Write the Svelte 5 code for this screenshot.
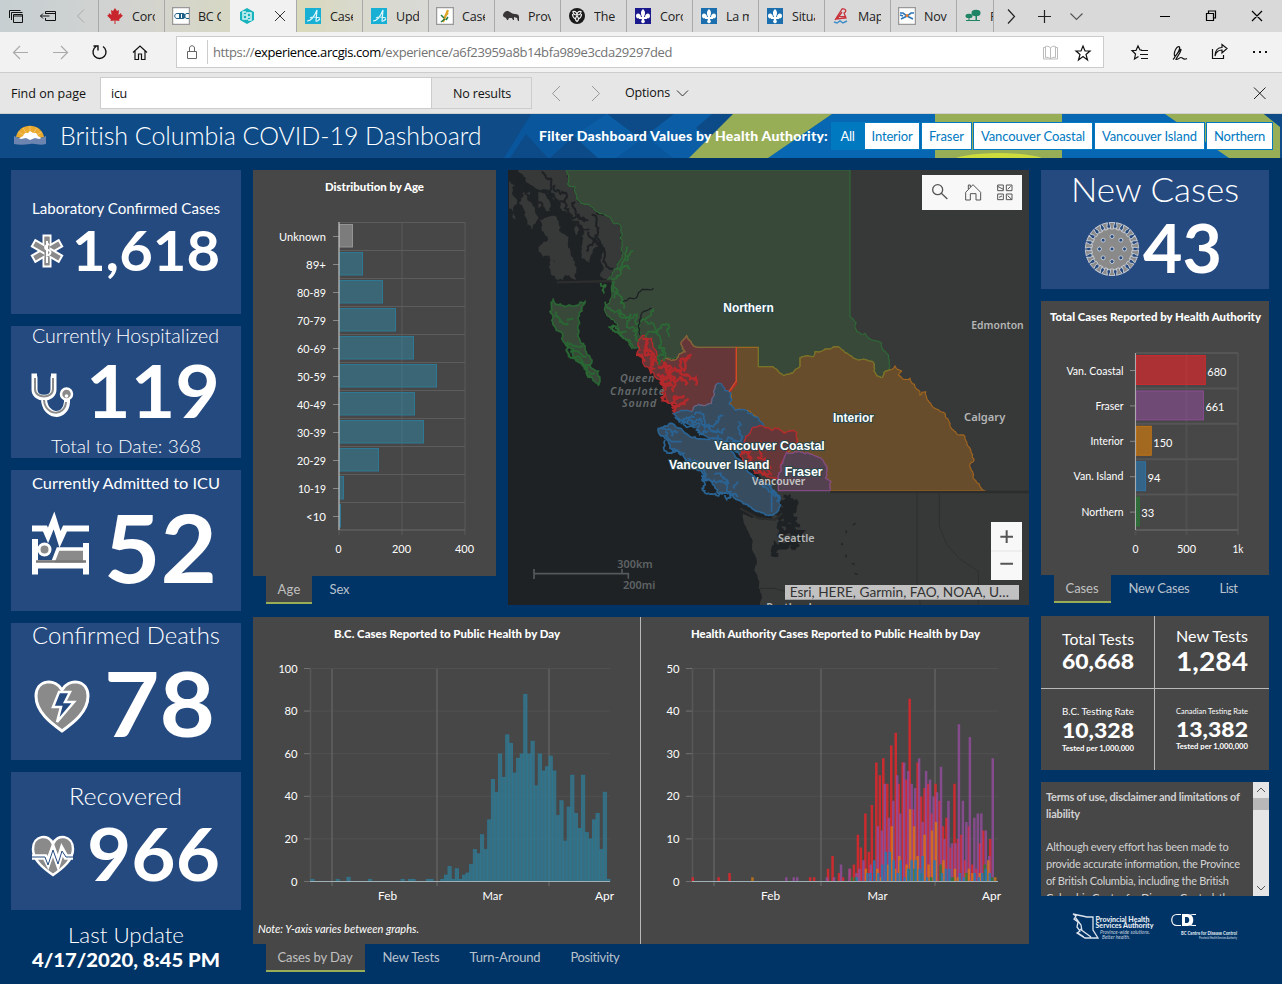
<script>
  // Tracks a run of text to a fixed measure by adjusting its letter spacing.
  function fit(node, width) {
    const range = document.createRange();
    range.selectNodeContents(node);
    const natural = range.getBoundingClientRect().width;
    node.style.letterSpacing = (width - natural) / node.textContent.length + 'px';
  }

  const tabsBefore = [
    { icon: 'maple', label: 'Coro' },
    { icon: 'cdc', label: 'BC C' }
  ];
  const tabsAfter = [
    { icon: 'ab', label: 'Case' },
    { icon: 'ab', label: 'Upda' },
    { icon: 'sask', label: 'Case' },
    { icon: 'bison', label: 'Prov' },
    { icon: 'ont', label: 'The' },
    { icon: 'qc', label: 'Coro', c: '#1a1a8c' },
    { icon: 'qc', label: 'La m', c: '#1b6fae' },
    { icon: 'qc', label: 'Situa', c: '#1b6fae' },
    { icon: 'nb', label: 'Map' },
    { icon: 'ns', label: 'Nov' },
    { icon: 'pei', label: 'P', last: true }
  ];

  const filters = [
    ['Interior', 54, 41], ['Fraser', 49, 35], ['Vancouver Coastal', 118, 104],
    ['Vancouver Island', 109, 95], ['Northern', 65, 51]
  ];

  const ages = [
    ['Unknown', 14, 47], ['89+', 24, 20], ['80-89', 44, 29], ['70-79', 57, 29], ['60-69', 75, 29],
    ['50-59', 98, 29], ['40-49', 76, 29], ['30-39', 85, 29], ['20-29', 40, 29], ['10-19', 5, 28], ['<10', 2, 20]
  ];

  const authorities = [
    { name: 'Van. Coastal', len: 57, v: 680, c: '#e3272b', op: 0.65 },
    { name: 'Fraser', len: 28, v: 661, c: '#984ea3', op: 0.5 },
    { name: 'Interior', len: 33, v: 150, c: '#d77c0c', op: 0.65 },
    { name: 'Van. Island', len: 50, v: 94, c: '#2879b4', op: 0.6 },
    { name: 'Northern', len: 42, v: 33, c: '#2a7a36', op: 0.7 }
  ];

  const early = new Map([[0, 1], [7, 1], [10, 2], [16, 1], [25, 1], [27, 1], [28, 1], [32, 1], [33, 1]]);
  const late = [1, 3, 7, 1, 6, 1, 3, 4, 8, 15, 13, 22, 15, 29, 48, 42, 60, 49, 69, 65, 51, 58, 60, 88, 60, 66, 45, 60, 52,
    54, 59, 52, 31, 38, 19, 35, 50, 32, 25, 50, 23, 20, 29, 32, 15, 42, 1];
  const daily = [...Array(83).keys()].map((i) => (i < 36 ? (early.get(i) ?? 0) : late[i - 36]));

  // Per-authority daily counts: colour, opacity, then position along the axis (half pixels) and count.
  const series = [
    ['#e3272b', 0.85, [1, 1, 53, 1, 75, 2, 237, 1, 245, 1, 273, 3, 282, 6, 295, 2, 303, 1, 317, 3, 325, 4, 333, 11, 339, 8, 348, 16, 355, 7, 361, 18, 370, 28, 377, 25, 384, 29, 392, 23, 400, 32, 409, 35, 415, 23, 423, 28, 430, 24, 437, 43, 444, 17, 453, 28, 460, 20, 467, 22, 474, 23, 481, 16, 489, 23, 497, 19, 504, 13, 511, 15, 519, 8, 527, 23, 534, 10, 541, 11, 548, 5, 556, 13, 563, 4, 571, 3, 578, 9, 585, 12, 599, 10]],
    ['#984ea3', 0.75, [189, 1, 204, 1, 211, 1, 271, 1, 285, 1, 299, 4, 316, 3, 330, 2, 336, 3, 344, 5, 359, 4, 373, 13, 381, 12, 387, 23, 395, 15, 404, 19, 412, 25, 418, 16, 426, 28, 434, 26, 441, 23, 448, 22, 456, 29, 463, 14, 470, 26, 478, 24, 485, 20, 492, 21, 500, 27, 507, 10, 515, 19, 522, 9, 529, 9, 536, 37, 544, 19, 551, 14, 558, 34, 567, 15, 574, 16, 581, 16, 590, 12, 597, 6, 604, 29]],
    ['#e07f0c', 0.7, [121, 1, 349, 3, 372, 3, 379, 1, 394, 4, 401, 13, 408, 3, 416, 6, 431, 4, 438, 17, 446, 13, 453, 6, 467, 11, 475, 4, 482, 12, 490, 14, 505, 5, 528, 3, 534, 1, 550, 2, 556, 3, 563, 2, 578, 2, 595, 5, 609, 1]],
    ['#2a7a36', 0.85, [321, 1, 328, 1, 435, 3, 447, 3, 461, 2, 480, 1, 499, 4, 519, 1, 524, 1, 551, 2, 588, 4, 603, 1]],
    ['#2879b4', 0.85, [331, 1, 352, 2, 358, 2, 366, 5, 374, 2, 382, 4, 389, 7, 397, 7, 405, 5, 413, 2, 419, 5, 427, 1, 434, 3, 441, 5, 449, 5, 457, 3, 463, 6, 472, 1, 487, 5, 502, 2, 510, 3, 517, 3, 538, 2, 546, 1, 568, 2, 576, 1, 583, 2, 590, 3, 598, 2]]
  ];

  // Roughens each slanted edge of an outline; shared edges come out the same from both sides.
  function hash(a, b) {
    const s = Math.sin(a * 12.9898 + b * 78.233) * 43758.5453;
    return s - Math.floor(s) - 0.5;
  }
  function edge(a, b, k, out) {
    const dx = b[0] - a[0], dy = b[1] - a[1], len = Math.hypot(dx, dy);
    if (len < 7 || !dx || !dy) { out.push(b); return; }
    const mx = (a[0] + b[0]) / 2, my = (a[1] + b[1]) / 2;
    const m = [mx + hash(mx, my) * len * k, my + hash(my, mx) * len * k];
    edge(a, m, k, out);
    edge(m, b, k, out);
  }
  function shape(str, k = 0.35, close = true) {
    const p = str.split(' ').map((q) => q.split(',').map(Number));
    const out = [p[0]];
    for (let i = 1; i < p.length; i++) edge(p[i - 1], p[i], k, out);
    if (close) edge(p[p.length - 1], p[0], k, out);
    return 'M' + out.map((q) => q[0].toFixed(1) + ' ' + q[1].toFixed(1)).join('L') + (close ? 'Z' : '');
  }

  const northern = '185,15 192,40 188,58 210,65 212,85 228,115 258,125 300,150 325,175 347,182 345,220 352,280 335,310 308,345 320,350 318,400 300,425 305,450 335,475 350,515 370,530 380,550 400,548 405,555 412,512 440,520 455,560 460,600 480,580 520,575 540,560 530,530 545,512 558,530 580,547 760,547 760,605 800,605 835,632 885,605 885,578 925,575 930,560 975,552 1000,545 1030,568 1060,585 1105,592 1115,632 1130,638 1155,615 1150,580 1130,535 1100,525 1080,505 1055,500 1040,460 1035,455 1035,15';
  const interior = '694,547 760,547 760,605 800,605 835,632 885,605 885,578 925,575 930,560 975,552 1000,545 1030,568 1060,585 1105,592 1115,632 1130,638 1155,615 1170,603 1190,618 1180,630 1215,640 1240,675 1245,690 1262,680 1290,730 1330,765 1360,810 1380,815 1395,850 1398,915 1405,940 1441,977 975,977 978,950 962,940 965,910 955,888 925,870 870,860 845,862 878,830 875,805 835,803 820,790 780,788 740,745 690,735 672,715 678,685 672,680 694,648';
  const coastalN = '412,512 440,520 455,560 460,600 480,580 520,575 540,560 530,530 545,512 558,530 580,547 694,547 694,648 672,680 655,665 638,655 628,690 620,715 580,718 560,740 505,745 515,715 490,715 478,680 455,640 440,620 420,605 395,570 405,555';
  const coastalS = '722,815 740,790 780,788 820,790 835,803 875,805 878,830 845,862 835,885 830,915 820,940 790,935 750,925 720,895 705,870 725,850';
  const fraser = '845,862 870,860 925,870 955,888 965,910 962,940 978,950 975,977 820,977 820,940 830,915 835,885';
  const islandMain = '505,745 560,740 580,718 620,715 628,690 638,655 655,665 672,680 678,685 672,715 690,735 740,745 780,788 740,790 722,815 725,850 705,870 690,850 670,830 640,818 600,812 570,790 520,765';
  const island = '460,790 500,775 530,792 560,817 600,822 650,835 690,875 720,900 760,945 795,962 825,1000 812,1045 795,1050 760,1040 690,1000 620,950 590,920 540,880 495,850 480,820';
  const haida = '145,400 155,418 175,422 200,424 240,410 222,470 218,510 240,550 260,610 285,650 280,660 245,625 210,580 175,530 165,500 145,480 135,440 140,425';
  const alaska = ['40,15 185,15 192,40 188,58 210,65 212,85 228,115 258,125 300,150 325,175 347,182 345,220 352,280 335,310 308,345 285,335 290,280 275,225 230,180 195,150 150,105 95,75',
    '12,40 30,60 32,100 30,165 12,130', '52,85 75,80 90,130 85,200 60,180 55,130', '100,80 125,95 135,140 100,130',
    '105,165 150,150 190,215 200,275 212,345 180,330 150,290 115,275 100,250 130,225', '155,20 195,120 225,190 215,210 165,130', '235,195 270,200 280,245 255,295 230,280', '130,275 160,290 175,345 150,335'];
  const usLand = '715,1045 740,1060 795,1065 830,1035 820,977 1572,977 1572,1320 765,1320 762,1260 755,1180 740,1120 718,1080';
  const channels = ['25,15 50,60 90,90 140,145 200,210 235,290 290,340', '90,70 140,130 180,140 240,170', '150,60 180,130 190,180 215,270', '260,150 285,230 295,290 325,310', '110,20 130,80 180,110', '210,110 225,160 250,165', '250,200 262,240 250,260'];
  const northFjords = ['318,350 345,315 375,312', '335,315 355,290 368,245', '360,285 385,258', '322,370 350,395 360,430', '300,410 345,435 395,490', '310,485 345,510 385,545', '325,480 365,500', '340,440 375,490 400,530', '405,510 408,470 445,430', '420,470 450,490 480,480 492,515', '440,500 470,530 480,590', '460,600 475,570 460,545', '285,355 298,385', '330,350 326,400', '410,520 430,500 460,500'];
  const haidaFjords = ['178,535 200,540 235,545', '195,560 225,565 245,575', '210,580 240,600 255,600', '230,600 250,620 270,625', '150,440 165,470 190,480', '190,530 215,575 260,635', '185,465 205,460'];
  const redFjords = ['412,520 420,560 440,600', '430,530 445,590 440,625', '400,565 420,590', '460,610 500,620 530,610 560,570', '525,625 560,640 578,658', '470,630 500,645 540,660', '465,650 500,660 490,710', '475,600 510,640 505,680', '505,700 535,690', '500,730 540,720 550,700', '480,590 500,610 495,650', '550,570 540,620', '455,630 480,640 475,660', '510,740 520,700'];
  const blueFjords = ['510,755 560,765 600,780', '530,770 570,755', '600,790 640,770 650,750', '620,800 660,790', '690,850 705,800 700,770', '640,810 690,830 700,860', '480,800 500,830 530,830', '500,850 540,865', '560,890 600,910', '590,930 640,950 680,980', '630,930 660,960', '690,970 700,950', '470,790 520,800', '770,960 800,990 800,1040', '800,980 825,1000', '560,765 580,790', '660,990 700,995', '520,760 550,785 610,800', '570,750 600,770 640,800', '655,830 690,850', '540,880 600,925 660,985', '785,960 815,1010', '480,825 520,860'];

  const gauge = Array.from({ length: 22 }, (_, i) => (i * 360) / 22);
  const spots = Array.from({ length: 8 }, (_, i) => [12.5 * Math.cos((i * Math.PI) / 4), 12.5 * Math.sin((i * Math.PI) / 4)]);
</script>

{#snippet t(x, y, s, size, len, anchor = 'start', weight = 400, fill = '#fff')}
  <g><text {x} {y} font-size={size} textLength={len} lengthAdjust="spacingAndGlyphs" text-anchor={anchor} font-weight={weight} {fill}>{s}</text></g>
{/snippet}

{#snippet favicon(tab)}
  <svg class="fav" width="18" height="18" viewBox="-1 -1 18 18">
    {#if tab.icon === 'maple'}
      <path fill="#c8252c" d="M8 0l2 3 2-1-.5 5L14 5l.5 2 1.5.5-4 4 .5 1.5-4-.5V16H7.500v-3.500l-4 .5.5-1.500-4-4L1.500 7 2 5l2.500 2L4 2l2 1z" />
    {:else if tab.icon === 'cdc'}
      <path fill="#fff" stroke="#999" stroke-width="1.5" d="M-.5-.5h17v17h-17z" /><path fill="#1d5f86" d="M6 5h4c3 0 3 6 0 6H6z" /><path fill="none" stroke="#1d5f86" d="M6 5.500H4c-3 0-3 5 0 5h2M16 5.500h-2c-3 0-3 5 0 5h2" /><path stroke="#fff" d="M8.500 6v4" />
    {:else if tab.icon === 'ab'}
      <path fill="#17afd4" d="M0 0h16v16H0z" /><path fill="none" stroke="#dff6fb" stroke-width="1.2" d="M2 13c5 0 8-6 10-11l-1 11c1 1 3-1 4-2M5 10c3-2 6-1 10 0" />
    {:else if tab.icon === 'sask'}
      <path fill="#fff" stroke="#999" stroke-width="1.5" d="M-.5-.5h17v17h-17z" /><path stroke="#e0a526" stroke-width="2.2" d="M6 14l5-12M8 8l3-3" /><path stroke="#257b46" stroke-width="1.5" d="M4 14l4-3M7 10L4 7M9 12l2-3" />
    {:else if tab.icon === 'bison'}
      <path fill="#3a3638" d="M0 8c0-3 2-5 5-5 3 1 4 3 7 3 3 0 4 1 4 3v4h-1l-1-3-3-1v3h-1l-1-2H6l-1 2H4l-1-2-2-1z" />
    {:else if tab.icon === 'ont'}
      <circle cx="8" cy="8" r="8" fill="#1a1a1a" /><path fill="none" stroke="#eee" stroke-width="1.2" d="M8 7C6 7 4 6 4 3.500 7 3 8 5 8 7zM8 7c2 0 4-1 4-3.500C9 3 8 5 8 7zM8 8c-2 2-2 4 0 5.500 2-1.500 2-3.500 0-5.500zM3.500 6c0 3 1 4 3 5M12.500 6c0 3-1 4-3 5" />
    {:else if tab.icon === 'qc'}
      <path fill={tab.c} d="M0 0h16v16H0z" /><path fill="#fff" d="M8 1c3 3 2 5 1 8h1c0-4 5-5 5-1 0 2-2 3-3 2v1H9l1 3-2 1.5L6 14l1-3H4v-1C3 11 1 10 1 8c0-4 5-3 5 1h1C6 6 5 4 8 1z" />
    {:else if tab.icon === 'nb'}
      <path fill="none" stroke="#c9303a" stroke-width="1.3" d="M2 12l7-11c4-1 5 3 2 4l2 5-9 1 5-7M5 8l7 1" /><path fill="none" stroke="#3f8ecb" stroke-width="1.5" d="M1 14l3 1 3-2 3 2 4-2" />
    {:else if tab.icon === 'ns'}
      <path fill="#fff" stroke="#999" stroke-width="1.5" d="M-.5-.5h17v17h-17z" /><path stroke="#2b76b9" stroke-width="1.6" fill="none" d="M1 5h3l4 3-6 3M15 5h-3L8 8l6 3M1 7l3 1" /><circle cx="8" cy="7.500" r="1.5" fill="#e9782b" />
    {:else if tab.icon === 'pei'}
      <g fill="#1f8465"><ellipse cx="11" cy="5" rx="4.5" ry="3.2" /><ellipse cx="4" cy="8" rx="3.5" ry="2.2" /><path d="M10.500 5h1.500v7h3v1H1v-1h2.500V9h1v3h6z" /></g>
    {/if}
  </svg>
{/snippet}

{#snippet tabItem(tab)}
  <div class="tab" class:last={tab.last}>
    {@render favicon(tab)}
    <span class="tab-label">{tab.label}</span>
  </div>
{/snippet}

<div class="page">
  <div class="tabstrip">
    <div class="strip-tools">
      <svg width="98" height="32" viewBox="0 0 98 32" fill="none" stroke="#111">
        <path d="M9.500 18V10.500h11M11.500 20V12.500h11M13.500 14.500h9v8h-9zM13 16h10" />
        <path d="M45.500 14v-2.500h10v9h-10V18M45 13.500h10M40.500 16h9M43 13.500L40.500 16l2.500 2.500" />
        <path stroke="#aaa" d="M84 9.500L77.500 16l6.500 6.500" />
      </svg>
    </div>
    {#each tabsBefore as tab}{@render tabItem(tab)}{/each}
    <div class="tab active">
      <svg width="67" height="32" viewBox="0 0 67 32" fill="none">
        <path fill="#18b3bd" d="M17 8l7 4v8l-7 4-7-4v-8z" /><path stroke="#d8f4f5" stroke-width="1.5" d="M16 12h-3v7h4v-4h-3M18 20h3v-7h-4v4h3" />
        <path stroke="#333" d="M45 11l10 10M55 11L45 21" />
      </svg>
    </div>
    {#each tabsAfter as tab}{@render tabItem(tab)}{/each}
    <svg class="window-tools" width="287" height="32" viewBox="994 0 287 32" fill="none" stroke="#222" stroke-width="1.2">
      <path d="M1008 9.500l6.500 7-6.500 7M1038 16.500h13M1044.500 10v13" />
      <path stroke="#555" d="M1070.500 13.500l6 6 6-6" />
      <path stroke="#000" d="M1160 16.500h10M1206.500 13.500h7v7h-7zM1208.500 13v-2h7v7h-2M1252 11l10 10M1262 11l-10 10" />
    </svg>
  </div>

  <div class="navbar">
    <svg width="176" height="40" viewBox="0 32 176 40" fill="none" stroke="#111" stroke-width="1.2">
      <path stroke="#aaa" d="M28 52.500H13.500M20 46l-6.500 6.500L20 59M53 52.500h14.500M61 46l6.500 6.500L61 59" />
      <path stroke-width="1.4" d="M96 46.500a6.500 6.500 0 1 0 7 0M93.500 46H98v4.500" />
      <path d="M133 52.500l7-6.500 7 6.500M135 51v8.500h3.500V54h3v5.500h3.500V51" />
    </svg>
    <div class="address">
      <svg width="35" height="30" viewBox="177 37 35 30" fill="none" stroke="#666"><path d="M187.500 51.500h9v7h-9zM189.500 51v-3c0-3 5-3 5 0v3" /><path stroke="#ccc" d="M207.500 40v24" /></svg>
      <span class="url" use:fit={459}>https://<b>experience.arcgis.com</b>/experience/a6f23959a8b14bfa989e3cda29297ded</span>
      <svg class="right" width="66" height="30" viewBox="1037 37 66 30" fill="none">
        <path stroke="#bbb" d="M1050.500 48v11h-7V47.500h2m5 11.500h7V47.500h-2M1050.500 48c-1-2-4-2-5-1.500v11c2-.5 4 0 5 1.500 1-1.500 3-2 5-1.500v-11c-2-.5-4-.5-5 1.500" />
        <path stroke="#111" stroke-width="1.2" d="M1083 46l2 5h5l-4 3.500 1.500 5.500-4.500-3.500-4.500 3.500 1.500-5.500-4-3.500h5z" />
      </svg>
    </div>
    <svg class="right" width="177" height="40" viewBox="1104 32 177 40" fill="none" stroke="#111" stroke-width="1.2">
      <path d="M1142 50h-2l-2-4-2 4.500h-4l3.500 3.500-1 5 4-2.500M1141 50.500h7M1140 54.500h8M1141 58.500h7" />
      <path d="M1173 59.500c1-1 2-2 2-3-2-3 1-10 4-10 2 1-1 7-4 10 4-5 6-8 6-7 0 3-4 7-5 10 3 0 3-2 5-2s2 3 6 1" />
      <path d="M1212.500 49v9.500h11V55M1215 56c1-4 4-6 7-6v3l5-4.500-5-4v3c-4 0-7 3-7 8.500z" />
      <path stroke-width="2" d="M1253 52h2M1259 52h2M1265 52h2" />
    </svg>
  </div>

  <div class="findbar">
    <span class="find-label"><span use:fit={75}>Find on page</span></span>
    <div class="find-input"><span use:fit={16}>icu</span></div>
    <div class="find-result"><span use:fit={58}>No results</span></div>
    <svg width="93" height="40" viewBox="532 73 93 40" fill="none" stroke="#999"><path d="M560 86l-7.500 7.500L560 101M592 86l7.500 7.500L592 101" /></svg>
    <span class="options"><span use:fit={45}>Options</span></span>
    <svg width="20" height="40" viewBox="668 73 20 40" fill="none" stroke="#333"><path d="M675 90.500l5.500 5.500 5.500-5.500" /></svg>
    <svg class="right" width="40" height="40" viewBox="1240 73 40 40" fill="none" stroke="#222"><path d="M1254 87.500l11.500 11.500M1265.500 87.500L1254 99" /></svg>
  </div>

  <header>
    <svg class="art" width="1282" height="44" viewBox="0 114 1282 44">
      <path fill="#0a569c" d="M531 114h300l-60 44H504z" />
      <path fill="#0d4b88" d="M526 134l22 24h-38zM607 114h67l-34 26zM574 136l24 22h-48zM712 114h22l-25 24-14-10z" />
      <path fill="#0b62ab" d="M574 136l33-22 34 25-25 19h-18zM646 136l28-22h38l-16 14 15 12-18 18h-20z" opacity=".7" />
      <path fill="#0767b3" d="M832 114h448v44H768z" />
      <path fill="#97ae57" d="M733 114h99l-64 44h-79zM935 114h127v44H935zM1165 114h99l16 13v31h-51z" />
      <ellipse cx="999" cy="162" rx="48" ry="9" fill="#cddb3d" />
      <path fill="#0e4b87" d="M1264 114h18v14z" />
    </svg>
    <svg class="sun" width="32" height="22" viewBox="0 0 32 22">
      <path fill="#eaa92f" d="M2 12C5-3 27-3 30 12L16 15z" /><path stroke="#f7d58a" stroke-width=".6" d="M16 13V1M16 13L9 3M16 13l7-10M16 13L4 7M16 13l12-6" />
      <path fill="#fff" d="M4 14l5-3 2-3h3l2-2 3 2h3l2 3 5 3-5 2H8z" /><path fill="#6c84b0" d="M0 11l7 3 5-1 4 2 5-2 4 1 7-3v8c-7 2-10-1-16 0-6 1-11 1-16 0z" />
    </svg>
    <h1><span use:fit={422}>British Columbia COVID-19 Dashboard</span></h1>
    <div class="filter"><span use:fit={289}>Filter Dashboard Values by Health Authority:</span></div>
    <div class="buttons">
      <div class="btn on" style:width="31px"><span use:fit={14}>All</span></div>
      {#each filters as [name, w, len]}<div class="btn" style:width="{w}px"><span use:fit={len}>{name}</span></div>{/each}
    </div>
  </header>

  <main>
    <div class="col left">
      <svg class="card" width="230" height="144" viewBox="11 170 230 144">
        {@render t(32, 214, 'Laboratory Confirmed Cases', 15, 188)}
        {#each [0, 60, 120] as a}<path transform="rotate({a} 47 251)" fill="#8a8a8a" stroke="#fff" stroke-width="2" d="M43.500 235.500h7v31h-7z" />{/each}
        <path fill="#8a8a8a" d="M44.500 237h5v28h-5z" /><path fill="none" stroke="#fff" stroke-width="2" d="M47 241v22M49 244c-5 2-5 5-1 6s3 5-2 6" />
        {@render t(72, 270.5, '1,618', 56, 148, 'start', 700)}
      </svg>
      <svg class="card" width="230" height="132" viewBox="11 326 230 132">
        {@render t(32, 343, 'Currently Hospitalized', 19, 187, 'start', 300)}
        <path fill="none" stroke="#fff" stroke-width="6" d="M37 376.500h-2.500v13c0 11 19 11 19 0v-13H51M44 398c0 20 22 21 23 4v-8" />
        <path fill="none" stroke="#8a8a8a" stroke-width="2" d="M35 378v11c0 10 18 10 18 0v-11M44 400c1 16 21 17 22 2" />
        <circle cx="66.5" cy="394" r="5.5" fill="#8a8a8a" stroke="#fff" stroke-width="2.5" /><circle cx="66.5" cy="396" r="1.8" fill="#fff" />
        {@render t(86, 418, '119', 73, 134, 'start', 700)}
        {@render t(51, 453, 'Total to Date: 368', 18.5, 150, 'start', 300)}
      </svg>
      <svg class="card" width="230" height="141" viewBox="11 470 230 141">
        {@render t(32, 489, 'Currently Admitted to ICU', 15.5, 188)}
        <path fill="none" stroke="#fff" stroke-width="6" d="M32 528.500h13l3 7 6-15 6 19 5-11h24" />
        <path fill="#8a8a8a" stroke="#fff" stroke-width="3.5" d="M34 566v-4h19l5-13h29v17z" />
        <path fill="none" stroke="#fff" stroke-width="6" d="M35 539v35.500M86 543v31.500M35 565.500h51" /><circle cx="44.5" cy="549.5" r="5.500" fill="#8a8a8a" stroke="#fff" stroke-width="3" />
        <path stroke="#777" stroke-width="2.5" d="M36 561.500h50" />
        {@render t(104, 583, '52', 94, 113, 'start', 700)}
      </svg>
      <svg class="card" width="230" height="137" viewBox="11 623 230 137">
        {@render t(32, 644, 'Confirmed Deaths', 23, 188, 'start', 300)}
        <path fill="#8a8a8a" stroke="#fff" stroke-width="3" d="M62 731c-11-8-26-19-26-35 0-17 20-18 26-6 6-12 26-11 26 6 0 16-15 27-26 35z" />
        <path fill="#254a80" stroke="#fff" stroke-width="2.5" d="M59 692h11l-5 10h9l-17 20 4-15h-8z" />
        {@render t(104, 737, '78', 90, 111, 'start', 700)}
      </svg>
      <svg class="card" width="230" height="138" viewBox="11 772 230 138">
        {@render t(69, 805, 'Recovered', 23, 113, 'start', 300)}
        <path fill="#8a8a8a" stroke="#fff" stroke-width="2.5" d="M53 875c-10-7-20-15-20-26 0-14 16-16 20-5 4-11 20-9 20 5 0 11-10 19-20 26z" />
        <path fill="none" stroke="#fff" stroke-width="5.5" d="M32 857h13l3 6 5-14 5 14 4-13 4 7h7" /><path fill="none" stroke="#254a80" d="M32 857h13l3 8 5-15 5 14 4-13 4 6h7" />
        {@render t(87, 880.5, '966', 73, 133, 'start', 700)}
      </svg>
      <svg class="update" width="230" height="50" viewBox="11 922 230 50">
        {@render t(68, 943, 'Last Update', 21, 116, 'start', 300)}
        {@render t(32, 967, '4/17/2020, 8:45 PM', 19.5, 188, 'start', 900)}
      </svg>
    </div>

    <div class="col middle">
      <div class="upper">
        <div class="age">
          <svg class="panel" width="243" height="406" viewBox="253 170 243 406">
            {@render t(325, 191, 'Distribution by Age', 11, 99, 'start', 900)}
            {#each [339, 402, 465] as x}<path stroke="#505050" stroke-width="2" d="M{x} 222v313" />{/each}
            {#each ages as [name, w, len], i}
              <path stroke="#5c5c5c" d="M339 {222.5 + i * 28}h126" />
              <rect x="339.5" y={224.5 + i * 28} width={w - 1} height="22.5" fill={i ? '#2e86a3' : '#999'} fill-opacity={i ? 0.5 : 0.65} stroke={i ? '#2e7893' : '#949494'} />
              <path stroke="#888" d="M333 {236.5 + i * 28}h6" />
              {@render t(326, 241 + i * 28, name, 11.5, len, 'end')}
            {/each}
            <path stroke="#6a6a6a" d="M339 530h126" /><path stroke="#bbb" stroke-opacity=".6" stroke-width="2" d="M339 222v308" />
            {@render t(338.5, 553, '0', 11.5, 6, 'middle')}{@render t(401.5, 553, '200', 11.5, 19, 'middle')}{@render t(464.5, 553, '400', 11.5, 19, 'middle')}
          </svg>
          <div class="tabs"><div class="sel" style:width="46px"><span use:fit={23}>Age</span></div><div class="opt" style:margin-left="18px"><span use:fit={20}>Sex</span></div></div>
        </div>
        <svg class="map" width="521" height="435" viewBox="9 15 1563 1305">
          <path fill="#1e2224" d="M0 0h1600v1400H0z" />
          <path fill="#373838" d="M600 15h972v970H800L600 700z" />
          <path fill="#373838" d={shape(usLand, 0.3)} />
          {#each alaska as a}<path fill="#373838" d={shape(a, 0.5)} />{/each}
          {#each channels as c}<path fill="none" stroke="#1e2224" stroke-width="6" d={shape(c, 0.6, false)} />{/each}
          <path fill="#38493a" stroke="#2f6836" stroke-width="3.5" d={shape(northern)} />
          <path fill="#38493a" stroke="#2a6633" stroke-width="5" d={shape(haida, 0.5)} />
          {#each haidaFjords as f}<path fill="none" stroke="#2a6633" stroke-width="6" d={shape(f, 0.7, false)} />{/each}
          <path fill="#684d2d" stroke="#a0651f" stroke-width="3.5" d={shape(interior)} />
          <path fill="none" stroke="#6b7a2c" stroke-width="3" d={shape('760,547 760,605 800,605 835,632 885,605 885,578 925,575 930,560 975,552 1000,545 1030,568 1060,585 1105,592 1115,632 1130,638 1155,615', 0.35, false)} />
          <path fill="#663739" stroke="#b52a2c" stroke-width="4" d={shape(coastalN, 0.4)} />
          <path fill="#384c60" stroke="#2a6495" stroke-width="4" d={shape(islandMain, 0.4)} />
          <path fill="#384c60" stroke="#2a6495" stroke-width="5" d={shape(island, 0.4)} />
          <path fill="#663739" stroke="#b52a2c" stroke-width="4" d={shape(coastalS, 0.4)} />
          <path fill="#54414f" stroke="#824a83" stroke-width="4" d={shape(fraser)} />
          <path fill="none" stroke="#856070" stroke-width="3" d={shape('560,740 580,718 620,715 628,690 638,655', 0.4, false)} />
          <path fill="none" stroke="#7a6a3c" stroke-width="4" d={shape('480,580 520,575 540,560 530,530 545,512 558,530 580,547 694,547', 0.4, false)} />
          <path fill="none" stroke="#d24a24" stroke-width="4" d="M694 547v101l-22 32" />
          {#each northFjords as f}<path fill="none" stroke="#2b6a35" stroke-width="5" d={shape(f, 0.7, false)} />{/each}
          {#each redFjords as f}<path fill="none" stroke="#b3292c" stroke-width="7" d={shape(f, 0.8, false)} />{/each}
          {#each blueFjords as f}<path fill="none" stroke="#2a6495" stroke-width="5" d={shape(f, 0.8, false)} />{/each}
          <path fill="none" stroke="#b52a2c" stroke-width="6" d={shape('710,860 730,890 745,910 790,925', 0.9, false)} />
          <path fill="none" stroke="#b52a2c" stroke-width="5" d={shape('770,830 780,880 800,930', 0.9, false)} />
          <path fill="none" stroke="#1e2224" stroke-width="4" d={shape('355,410 390,400 445,370', 0.4, false)} />
          <path fill="none" stroke="#1e2224" stroke-width="4" d={shape('405,510 408,460 440,430', 0.4, false)} />
          <path fill="#1e2224" d={shape('515,765 545,790 575,790 572,805 540,800', 0.4)} />
          <path fill="#1e2224" d={shape('835,990 860,1000 865,1050 885,1080 870,1120 850,1100 840,1060', 0.9)} />
          <path fill="none" stroke="#1e2224" stroke-width="12" d={shape('850,1060 875,1100 870,1140 820,1170', 1, false)} />
          <path fill="none" stroke="#222626" stroke-width="4" stroke-dasharray="10 30" d={shape('1052,1075 1020,1110 1035,1190 1075,1240', 0.5, false)} />
          <path fill="none" stroke="#2c2d2d" stroke-width="3" d={shape('765,1270 810,1270 860,1290', 0.3, false)} />
          <path fill="none" stroke="#2c2d2d" stroke-width="7" d="M976 981h596M155 352l165-4M705 1030l55 30 50 4 22-20" />
          <path fill="none" stroke="#2f3030" stroke-width="3" d="M1236 985v265l10 70M1303 985v98l22 55 40 45 55 35v100" />
          <g font-family="'Noto Sans', sans-serif">
            {#each [['Queen', 345, 652, 103], ['Charlotte', 315, 689, 163], ['Sound', 351, 726, 103]] as [s, x, y, l]}<text {x} {y} font-size="32" font-style="italic" font-weight="600" fill="#666b6d" textLength={l}>{s}</text>{/each}
            {@render t(1399, 491, 'Edmonton', 31, 157, 'start', 600, '#b5b6b6')}
            {@render t(1377, 769, 'Calgary', 31, 124, 'start', 600, '#b5b6b6')}
            {@render t(819, 1131, 'Seattle', 30, 110, 'start', 600, '#b5b6b6')}
            {@render t(741, 960, 'Vancouver', 31, 160, 'start', 600, '#c5c5c5')}
            {@render t(784, 1337, 'Portland', 30, 136, 'start', 600, '#b5b6b6')}
            {@render t(337, 1209, '300km', 33, 106, 'start', 600, '#5f6365')}
            {@render t(354, 1272, '200mi', 33, 97, 'start', 600, '#5f6365')}
          </g>
          <path fill="none" stroke="#55595a" stroke-width="5" d="M87 1212v30M87 1226h283v15M351 1226v-14" />
          <g class="halo" font-family="'Liberation Sans', sans-serif">
            {@render t(655, 440, 'Northern', 39, 151, 'start', 700)}
            {@render t(984, 771, 'Interior', 39, 123, 'start', 700)}
            {@render t(628, 855, 'Vancouver Coastal', 39, 331, 'start', 700)}
            {@render t(492, 912, 'Vancouver Island', 39, 301, 'start', 700)}
            {@render t(839, 933, 'Fraser', 39, 114, 'start', 700)}
          </g>
          <path fill="#f8f8f8" d="M1251 30h300v105h-300zM1458 1071h93v174h-93z" /><path stroke="#ddd" stroke-width="2" d="M1458 1158h93" />
          <g fill="none" stroke="#555" stroke-width="4">
            <circle cx="1298" cy="74" r="15" /><path d="M1309 85l18 17" /><path stroke-width="6" d="M1486 1115h38M1505 1096v38M1486 1196h38" />
            <path stroke-width="3" d="M1382 82l22-23 23 23v23h-14V86h-17v19h-14zM1390 72V60h6v6" />
            <path stroke-width="3" d="M1478 60h17v17h-17zM1504 60h17v17h-17zM1478 87h17v17h-17zM1504 87h17v17h-17zM1478 64l17 9M1508 73l9-9M1482 97l9-4M1508 92l13 12" />
          </g>
          <path fill="#c8c8c8" fill-opacity=".95" d="M840 1260h702v44H840z" />
          {@render t(854, 1296, 'Esri, HERE, Garmin, FAO, NOAA, U…', 38, 658, 'start', 400, '#333')}
        </svg>
      </div>
      <div class="lower">
        <svg class="panel" width="776" height="327" viewBox="253 617 776 327">
          {@render t(334, 638, 'B.C. Cases Reported to Public Health by Day', 11, 226, 'start', 900)}
          {@render t(691, 638, 'Health Authority Cases Reported to Public Health by Day', 11, 289, 'start', 900)}
          {#each [0, 1, 2, 3, 4, 5] as i}
            <path stroke="#515151" d="M304 {881.5 - i * 42.6}h306M686 {881.5 - i * 42.6}h312" />
            <path stroke="#707070" d="M304 {881.5 - i * 42.6}h6M686 {881.5 - i * 42.6}h6" />
            {@render t(297.5, 885.5 - i * 42.6, String(i * 20), 11.5, i === 5 ? 19 : i ? 13 : 6.5, 'end')}
            {@render t(679.5, 885.5 - i * 42.6, String(i * 10), 11.5, i ? 13 : 6.5, 'end')}
          {/each}
          <path stroke="#585858" stroke-width="1.5" d="M310.500 669v213M692.500 669v213" />
          <path stroke="#626262" stroke-width="1.5" d="M332 669v217M437 669v217M549 669v217M714 669v217M821 669v217M935 669v217" />
          {#each daily as v, i}{#if v}<rect x={310.8 + i * 3.61} y={881.5 - v * 2.125} width="3.2" height={v * 2.125} fill="#2e86a3" fill-opacity=".62" stroke="#2e7893" stroke-width=".8" />{/if}{/each}
          {#each series as [c, op, pts]}
            {#each pts as x, i}{#if i % 2 === 0}<rect x={691 + x / 2.01} y={881.5 - pts[i + 1] * 4.25} width="2.5" height={pts[i + 1] * 4.25} fill={c} fill-opacity={op} />{/if}{/each}
          {/each}
          <path stroke="#9fb0b6" d="M310 881.500h300M692 881.500h306" />
          {@render t(378, 900, 'Feb', 11.5, 19)}{@render t(482.5, 900, 'Mar', 11.5, 20)}{@render t(595, 900, 'Apr', 11.5, 19)}
          {@render t(761, 900, 'Feb', 11.5, 19)}{@render t(867.5, 900, 'Mar', 11.5, 20)}{@render t(982, 900, 'Apr', 11.5, 19)}
          <g font-style="italic">{@render t(258, 933, 'Note: Y-axis varies between graphs.', 10.5, 161)}</g>
          <path stroke="#b8b8b8" d="M640.500 617v327" />
        </svg>
        <div class="tabs"><div class="sel" style:width="99px"><span use:fit={75}>Cases by Day</span></div><div class="opt" style:margin-left="18px"><span use:fit={57}>New Tests</span></div><div class="opt" style:margin-left="30px"><span use:fit={71}>Turn-Around</span></div><div class="opt" style:margin-left="30px"><span use:fit={49}>Positivity</span></div></div>
      </div>
    </div>

    <div class="col right-col">
      <svg class="card" width="228" height="119" viewBox="1041 170 228 119">
        {@render t(1071, 202, 'New Cases', 34, 168, 'start', 300)}
        <circle cx="1112" cy="249" r="21" fill="#8a8a8a" stroke="#c5cad3" />
        {#each gauge as a}<path transform="rotate({a} 1112 249)" fill="#8a8a8a" stroke="#c5cad3" stroke-width=".9" d="M1110.500 229v-3l-1.500-3.500h6l-1.500 3.500v3z" />{/each}
        {#each spots as [dx, dy]}<circle cx={1112 + dx} cy={249 + dy} r="2" fill="#254a80" stroke="#c5cad3" />{/each}
        <circle cx="1112" cy="249" r="2" fill="#254a80" stroke="#c5cad3" />
        {@render t(1143, 273, '43', 67, 79, 'start', 700)}
      </svg>
      <div class="totals">
        <svg class="panel" width="228" height="274" viewBox="1041 301 228 274">
          {@render t(1050, 321, 'Total Cases Reported by Health Authority', 11, 211, 'start', 900)}
          {#each [1135.5, 1186.5, 1238] as x}<path stroke="#505050" stroke-width="2" d="M{x} 353v182" />{/each}
          {#each authorities as a, i}
            <path stroke="#555" stroke-width="2" d="M1136 {353 + i * 35.4}h102" />
            <rect x="1136" y={355.5 + i * 35.4} width={a.v * 0.102} height="29" fill={a.c} fill-opacity={a.op} stroke={a.c} stroke-opacity=".75" />
            <path stroke="#888" d="M1130 {370.5 + i * 35.4}h6" />
            {@render t(1123.5, 374.5 + i * 35.25, a.name, 10.5, a.len, 'end')}
            {@render t(1138 + a.v * 0.102, 376 + i * 35.25, String(a.v), 11.5, a.v > 99 ? 19 : 13)}
          {/each}
          <path stroke="#5c5c5c" stroke-width="2" d="M1136 530h102" /><path stroke="#aaa" d="M1135.500 353v177" />
          {@render t(1135.5, 553, '0', 11.5, 6, 'middle')}{@render t(1186.5, 553, '500', 11.5, 19, 'middle')}{@render t(1238, 553, '1k', 11.5, 11, 'middle')}
        </svg>
        <div class="tabs"><div class="sel" style:width="57px"><span use:fit={33}>Cases</span></div><div class="opt" style:margin-left="18px"><span use:fit={61}>New Cases</span></div><div class="opt" style:margin-left="30px"><span use:fit={18}>List</span></div></div>
      </div>
      <svg class="panel" width="228" height="154" viewBox="1041 616 228 154">
        {@render t(1062, 645, 'Total Tests', 15.5, 72)}{@render t(1062, 669, '60,668', 20.5, 72, 'start', 900)}
        {@render t(1176, 642, 'New Tests', 15.5, 72)}{@render t(1176, 671, '1,284', 27, 72, 'start', 700)}
        {@render t(1062, 715, 'B.C. Testing Rate', 10, 72)}{@render t(1062, 738, '10,328', 21, 72, 'start', 900)}{@render t(1062, 751, 'Tested per 1,000,000', 7, 72, 'start', 700)}
        {@render t(1176, 714, 'Canadian Testing Rate', 7.5, 72)}{@render t(1176, 737, '13,382', 21, 72, 'start', 900)}{@render t(1176, 749, 'Tested per 1,000,000', 7, 72, 'start', 700)}
        <path stroke="#b8b8b8" d="M1154.500 616v154M1041 688.500h228" />
      </svg>
      <div class="terms">
        <div class="terms-text">
          <p><b><span use:fit={194}>Terms of use, disclaimer and limitations of</span><span use:fit={34}>liability</span></b></p>
          <p><span use:fit={182}>Although every effort has been made to</span><span use:fit={194}>provide accurate information, the Province</span><span use:fit={183}>of British Columbia, including the British</span><span use:fit={188}>Columbia Centre for Disease Control, the</span></p>
        </div>
        <svg width="16" height="114" viewBox="0 0 16 114"><path fill="#e5e5e5" d="M0 0h16v114H0z" /><path fill="#b8b8b8" d="M0 16h16v12H0z" /><path fill="none" stroke="#555" d="M4 10l4-4 4 4M4 104l4 4 4-4" /></svg>
      </div>
      <svg class="logos" width="228" height="36" viewBox="1041 908 228 36">
        <path fill="none" stroke="#dce4ee" stroke-width="1.3" d="M1073 914l14 3h6v13l5 8h-13l-8-5 3-2-3-4 1-5-4-3 2-3zM1075 917l6 8 1 6M1080 929l11 8M1078 933l6 4" />
        {@render t(1095.5, 922, 'Provincial Health', 7, 54, 'start', 900, '#e8edf3')}
        {@render t(1095.5, 928, 'Services Authority', 7, 58, 'start', 900, '#e8edf3')}
        <g font-style="italic">{@render t(1100, 933.5, 'Province-wide solutions.', 5.5, 50, 'start', 400, '#c5d1df')}{@render t(1102, 938.5, 'Better health.', 5.5, 28, 'start', 400, '#c5d1df')}</g>
        <path fill="#fff" d="M1182 914h6c7 0 7 12 0 12h-6z" /><path fill="none" stroke="#fff" stroke-width="1.2" d="M1181 914.500h-4c-7 0-7 11 0 11h4M1196 914.500h-3c-6 0-6 11 0 11h3" /><path fill="#003366" d="M1185 917h2c3 0 3 6 0 6h-2z" />
        {@render t(1181, 934.5, 'BC Centre for Disease Control', 5, 56, 'start', 900, '#dce4ee')}
        {@render t(1199, 939, 'Provincial Health Services Authority', 3, 38, 'start', 700, '#b9c7d8')}
      </svg>
    </div>
  </main>
</div>

<style>
  :global(body) { margin: 0; background: #003366; overflow: hidden; }
  .page { width: 1282px; height: 984px; overflow: hidden; background: #003366; font-family: Lato, sans-serif; color: #fff; }
  svg { display: block; flex: none; }
  .tabstrip { display: flex; height: 32px; box-sizing: border-box; background: linear-gradient(90deg, #c6cfd1 0, #d2d3d1 120px, #d6d6c8 200px, #d9d9bb 300px, #d9d9cc 350px, #d9d9d9 450px); font-family: 'Open Sans', sans-serif; }
  .tab { box-sizing: border-box; width: 66px; flex: none; display: flex; align-items: center; gap: 8px; padding-left: 7px; border-left: 1px solid #a9a9a9; font-size: 12.5px; color: #222; }
  .tab-label { width: 23px; overflow: hidden; white-space: nowrap; letter-spacing: -0.2px; }
  .tab.last { width: 38px; border-right: 1px solid #a9a9a9; overflow: hidden; }
  .tab.active { width: 66px; padding: 0; border: 0; background: #f1f1f1; }
  .navbar { display: flex; height: 41px; box-sizing: border-box; background: #f2f2f2; border-bottom: 1px solid #ccc; font-family: 'Open Sans', sans-serif; }
  .address { box-sizing: border-box; width: 928px; height: 32px; margin-top: 4px; border: 1px solid #ccc; background: #fff; display: flex; align-items: center; }
  .url { margin-left: 1px; font-size: 13px; color: #737373; white-space: nowrap; }
  .url b { font-weight: 400; color: #000; }
  .right { margin-left: auto; }
  .navbar > .right { margin-left: 0; }
  .findbar { display: flex; align-items: center; height: 41px; box-sizing: border-box; background: #e6e6e6; border-bottom: 1px solid #d0d0d0; font-family: 'Open Sans', sans-serif; font-size: 12.5px; color: #111; white-space: nowrap; }
  .find-label { box-sizing: border-box; width: 100px; padding-left: 11px; }
  .find-input, .find-result { box-sizing: border-box; height: 32px; display: flex; align-items: center; border: 1px solid #ccc; }
  .find-input { width: 332px; padding-left: 10px; background: #fff; }
  .find-result { width: 100px; padding-left: 21px; border-left: 0; }
  .options { width: 45px; padding-bottom: 1px; }
  .findbar > .right { margin-right: 2px; }
  header { position: relative; height: 44px; display: flex; align-items: center; background: #0e4b87; }
  .art { position: absolute; left: 0; top: 0; }
  .sun, h1, .filter, .buttons { position: relative; white-space: nowrap; }
  .sun { margin-left: 14px; }
  h1 { margin: 0 0 0 14px; width: 479px; font-size: 25px; font-weight: 300; line-height: 42px; height: 44px; }
  .filter { width: 293px; padding-bottom: 1px; font-size: 14px; font-weight: 900; }
  .buttons { display: flex; gap: 3px; }
  .btn { box-sizing: border-box; height: 26px; display: flex; align-items: center; justify-content: center; background: #fff; color: #0079c1; font-size: 13px; box-shadow: 0 0 0 1px #0079c1; }
  .btn.on { background: #0079c1; color: #fff; margin-right: -1px; }
  main { display: flex; gap: 12px; padding: 12px 11px 0; }
  .col { display: flex; flex-direction: column; gap: 12px; }
  .left { width: 230px; }
  .middle { width: 776px; }
  .right-col { width: 228px; }
  .card { background: #254a80; }
  .panel { background: #474747; }
  .upper { display: flex; gap: 12px; height: 435px; }
  .age { width: 243px; }
  .totals { height: 303px; }
  .tabs { display: flex; height: 28px; padding-left: 12.5px; font-size: 13px; line-height: 27px; color: #b9c2cc; white-space: nowrap; }
  .sel { box-sizing: border-box; height: 28px; padding-left: 12px; background: #474747; border-bottom: 2px solid #97ae57; color: #c0c0c0; }
  .halo :global(text) { stroke: #28474c; stroke-width: 6px; paint-order: stroke; }
  .terms { display: flex; height: 114px; overflow: hidden; background: #474747; }
  .terms-text { width: 207px; padding: 6px 0 0 5px; font-size: 11px; line-height: 17px; color: #d2d2d2; white-space: nowrap; }
  .terms p { margin: 0 0 16px; }
  .terms p span { display: block; }
</style>
